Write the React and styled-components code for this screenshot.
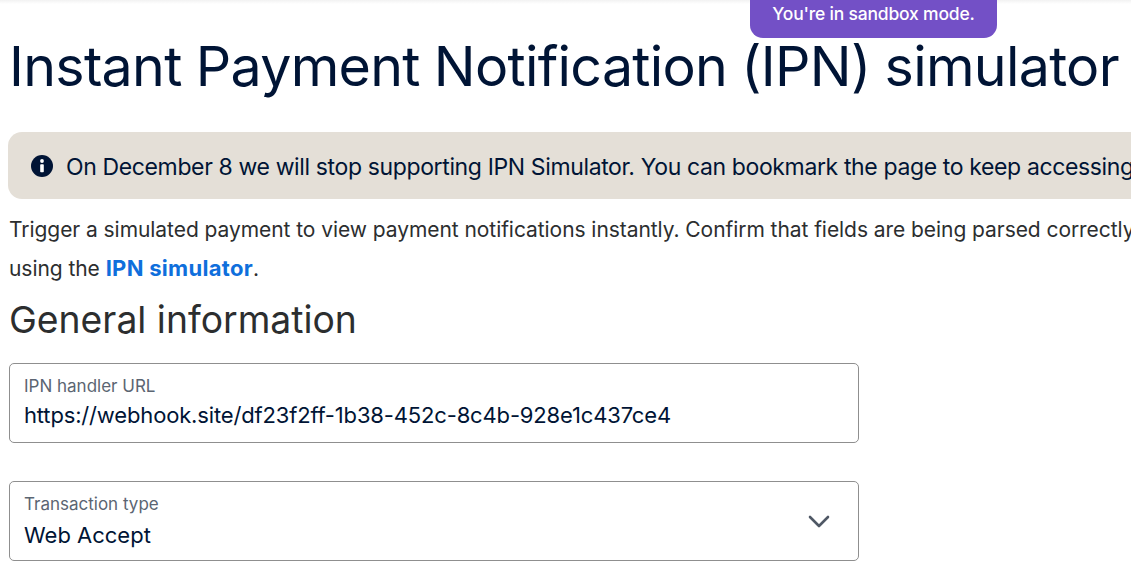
import React from 'react';
import styled, { createGlobalStyle } from 'styled-components';

const GlobalStyle = createGlobalStyle`
  html, body {
    margin: 0;
    height: 100%;
    overflow: hidden;
    background: #fff;
    font-family: Inter, "Liberation Sans", sans-serif;
  }
`;

const Page = styled.main`
  position: relative;
  width: 1131px;
  height: 567px;
  overflow: hidden;
  padding: 3px 0 0 9px;
  box-sizing: border-box;
  background: linear-gradient(#f2f2f2, #fff 4px);
`;

const SandboxBadge = styled.div`
  position: absolute;
  top: 0;
  left: 750px;
  width: 247px;
  height: 38px;
  padding-bottom: 11px;
  box-sizing: border-box;
  display: flex;
  align-items: center;
  justify-content: center;
  background: #7350c6;
  color: #fff;
  font-size: 17.5px;
  font-weight: 500;
  letter-spacing: -0.2px;
  border-radius: 0 0 13px 13px;
`;

const Title = styled.h1`
  margin: 27px 0 0;
  height: 72px;
  line-height: 72px;
  font-size: 55.5px;
  font-weight: 400;
  letter-spacing: -0.7px;
  word-spacing: -0.8px;
  color: #001435;
  white-space: nowrap;
`;

const Alert = styled.div`
  margin: 30px 0 0 -1px;
  width: 1300px;
  height: 67px;
  padding-left: 22px;
  box-sizing: border-box;
  display: flex;
  align-items: center;
  gap: 12px;
  background: #e4dfd7;
  border-radius: 14px;
  color: #001435;
  font-size: 23px;
  letter-spacing: -0.37px;
  white-space: nowrap;
`;

const AlertText = styled.span`
  padding-top: 2px;
`;

const Intro = styled.p`
  margin: 12px 0 0;
  width: 1300px;
  font-size: 21px;
  line-height: 38px;
  letter-spacing: -0.06px;
  color: #2c2e2f;
`;

const Link = styled.a`
  color: #0f6fdc;
  font-size: 22px;
  font-weight: 700;
  letter-spacing: 0.3px;
  text-decoration: none;
`;

const SectionTitle = styled.h2`
  margin: 6px 0 0;
  height: 52px;
  line-height: 52px;
  font-size: 37.3px;
  font-weight: 400;
  color: #2c2e2f;
`;

const Form = styled.form`
  margin-top: 17px;
  display: flex;
  flex-direction: column;
  gap: 38px;
`;

const Field = styled.div`
  position: relative;
  width: 850px;
  height: 80px;
  padding: 12px 14px 0;
  box-sizing: border-box;
  border: 1px solid #8f8f8f;
  border-radius: 5px;
  background: #fff;
`;

const FieldLabel = styled.label`
  display: block;
  font-size: 17px;
  line-height: 20px;
  color: #5b6572;
`;

const FieldValue = styled.div`
  margin-top: ${(p) => p.$top}px;
  font-size: 22px;
  line-height: 30px;
  letter-spacing: ${(p) => p.$spacing || 0}px;
  color: #001435;
`;

const Chevron = styled.svg`
  position: absolute;
  top: 32px;
  right: 27px;
  width: 24px;
  height: 16px;
`;

const InfoIcon = () => (
  <svg width="24" height="24" viewBox="0 0 24 24" aria-hidden="true">
    <circle cx="12" cy="12" r="11" fill="#001435" />
    <circle cx="12" cy="7" r="1.9" fill="#fff" />
    <rect x="10.2" y="10.2" width="3.6" height="8" rx="0.8" fill="#fff" />
  </svg>
);

export default function App() {
  return (
    <>
      <GlobalStyle />
      <Page>
        <SandboxBadge>You're in sandbox mode.</SandboxBadge>
        <Title>Instant Payment Notification (IPN) simulator</Title>
        <Alert>
          <InfoIcon />
          <AlertText>On December 8 we will stop supporting IPN Simulator. You can bookmark the page to keep accessing it.</AlertText>
        </Alert>
        <Intro>
          Trigger a simulated payment to view payment notifications instantly. Confirm that fields are being parsed correctly by
          <br />
          using the <Link href="#">IPN simulator</Link>.
        </Intro>
        <SectionTitle>General information</SectionTitle>
        <Form>
          <Field>
            <FieldLabel>IPN handler URL</FieldLabel>
            <FieldValue $top={4} $spacing={-0.16}>https://webhook.site/df23f2ff-1b38-452c-8c4b-928e1c437ce4</FieldValue>
          </Field>
          <Field>
            <FieldLabel>Transaction type</FieldLabel>
            <FieldValue $top={6}>Web Accept</FieldValue>
            <Chevron viewBox="0 0 24 16" fill="none" stroke="#4f5865" strokeWidth="2.6" strokeLinecap="round" strokeLinejoin="round">
              <path d="M3 3l9 9 9-9" />
            </Chevron>
          </Field>
        </Form>
      </Page>
    </>
  );
}
